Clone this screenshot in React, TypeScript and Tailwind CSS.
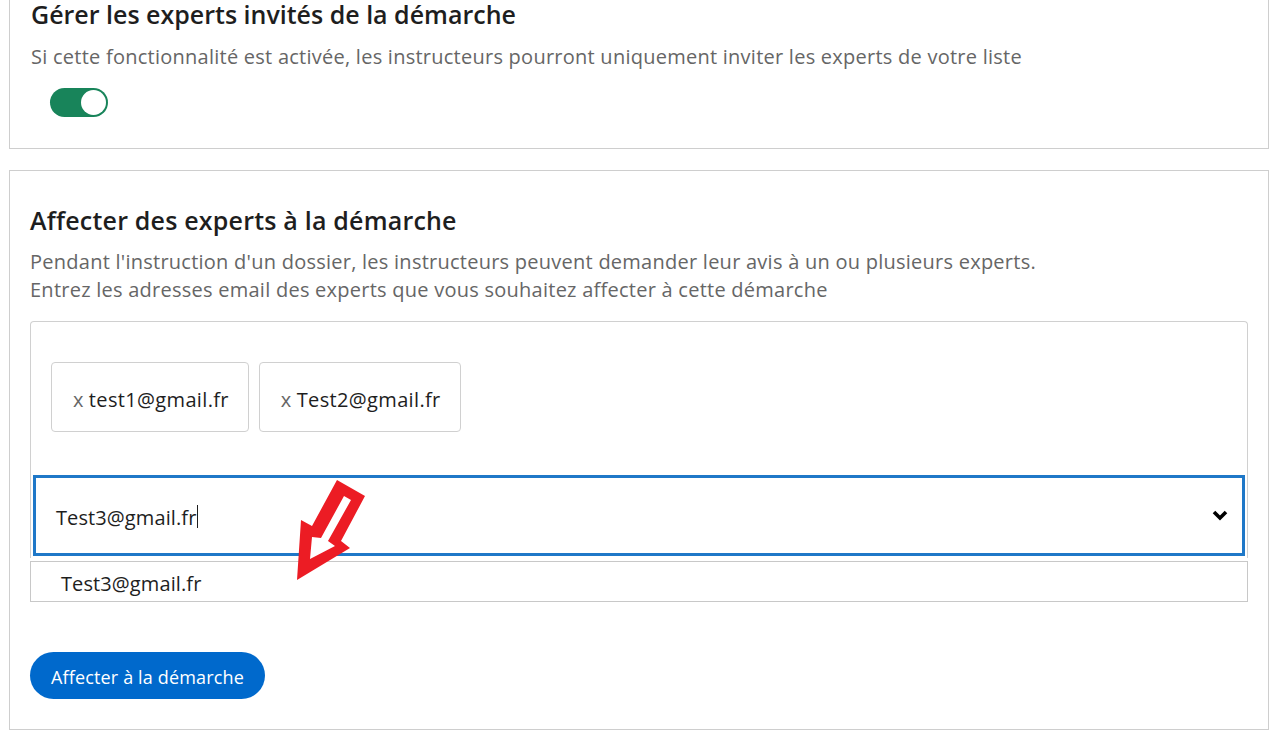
const font = { fontFamily: "'Open Sans', 'Liberation Sans', sans-serif" };

function Toggle() {
  return (
    <div className="mt-[17px] ml-[40px] flex h-[29px] w-[58px] items-center justify-end rounded-full bg-[#18845a] pr-[2px]">
      <div className="h-[25px] w-[25px] rounded-full bg-white" />
    </div>
  );
}

function Chip({ email }: { email: string }) {
  return (
    <div className="flex h-[70px] items-center rounded-[4px] border border-[#d0d0d0] pt-[5px] pl-[21px] pr-[19px] text-[20px] tracking-[0.35px]">
      <span className="mr-[5px] text-[#666]">x</span>
      <span className="text-[#1e1e1e]">{email}</span>
    </div>
  );
}

function Chevron() {
  return (
    <svg width="16" height="11" viewBox="0 0 16 11" className="ml-auto">
      <polyline points="2,2 8,8 14,2" fill="none" stroke="#000" strokeWidth="3.6" strokeLinejoin="miter" />
    </svg>
  );
}

function RedArrow() {
  return (
    <svg className="absolute left-[285px] top-[475px]" width="90" height="110" viewBox="285 475 90 110">
      <polygon
        points="337,480 365,496 341,541 350,548 297,580 301,520 312,526"
        fill="#ec1c24"
      />
      <polygon
        points="344,496 351,500 328,541 335,546 310,559 312,537 321,538"
        fill="white"
      />
    </svg>
  );
}

export default function App() {
  return (
    <div className="relative min-h-screen bg-white text-[#1e1e1e]" style={font}>
      <div className="ml-[9px] w-[1260px]">
        <section className="border border-t-0 border-[#cecece] pt-[1px] pb-[31px]">
          <h2 className="pl-[21px] text-[25px] font-semibold leading-[26px] text-[#1e1e1e]">
            Gérer les experts invités de la démarche
          </h2>
          <p className="mt-[16px] pl-[21px] text-[20px] leading-[28px] tracking-[0.25px] text-[#666]">
            Si cette fonctionnalité est activée, les instructeurs pourront uniquement inviter les experts de votre liste
          </p>
          <Toggle />
        </section>

        <section className="mt-[21px] border border-[#cecece] px-[20px] pt-[33px] pb-[30px]">
          <h2 className="text-[25px] font-semibold leading-[32px] tracking-[0.2px] text-[#1e1e1e]">
            Affecter des experts à la démarche
          </h2>
          <p className="mt-[12px] text-[20px] leading-[28px] tracking-[0.25px] text-[#666]">
            Pendant l'instruction d'un dossier, les instructeurs peuvent demander leur avis à un ou plusieurs experts.
            <br />
            Entrez les adresses email des experts que vous souhaitez affecter à cette démarche
          </p>

          <div className="mt-[17px] rounded-t-[4px] border border-b-0 border-[#d0d0d0] px-[2px] pt-[40px] pb-[2px]">
            <div className="flex gap-[10px] pl-[18px]">
              <Chip email="test1@gmail.fr" />
              <Chip email="Test2@gmail.fr" />
            </div>
            <div className="mt-[43px] flex h-[81px] items-center border-[3px] border-[#1f78c8] pl-[20px] pr-[14px]">
              <span className="pt-[5px] text-[20px] tracking-[0.1px] text-[#1e1e1e]">Test3@gmail.fr</span>
              <span className="ml-[1px] mt-[2px] h-[23px] w-[1px] bg-[#1e1e1e]" />
              <Chevron />
            </div>
          </div>
          <div className="mt-[3px] flex h-[41px] items-center border border-[#c8c8c8] pt-[5px] pl-[30px] text-[20px] tracking-[0.1px] text-[#1e1e1e]">
            Test3@gmail.fr
          </div>

          <button className="mt-[50px] h-[47px] rounded-full bg-[#0069cc] px-[21px] pt-[3px] text-[18px] tracking-[0.15px] text-white">
            Affecter à la démarche
          </button>
        </section>
      </div>
      <RedArrow />
    </div>
  );
}
